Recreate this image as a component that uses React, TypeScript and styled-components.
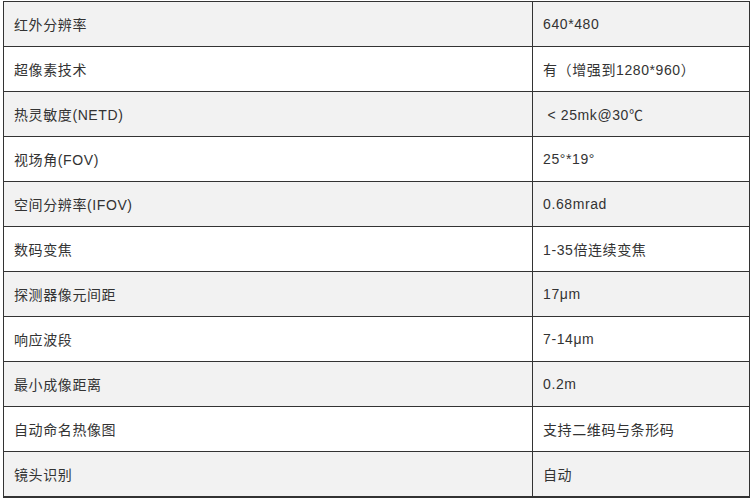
import React from "react";
import styled, { createGlobalStyle } from "styled-components";

const Global = createGlobalStyle`
  html, body { margin: 0; padding: 0; background: #ffffff; }
  body { font-family: "Liberation Sans", "Noto Sans CJK SC", Arial, sans-serif; overflow: hidden; }
`;

const Page = styled.div`
  padding: 1px 0 0 3px;
  width: 746px;
`;

const Table = styled.table`
  border-collapse: collapse;
  width: 746px;
  table-layout: fixed;
  border-bottom: 2px solid #333333;
`;

const Row = styled.tr<{ $shade: boolean }>`
  height: 45px;
  background: ${(p) => (p.$shade ? "#f2f2f2" : "#ffffff")};
`;

const Cell = styled.td<{ $w: number }>`
  width: ${(p) => p.$w}px;
  border: 1px solid #333333;
  padding: 0 0 0 10px;
  font-size: 14px;
  letter-spacing: 0.6px;
  color: #333333;
  vertical-align: middle;
  white-space: nowrap;
  box-sizing: border-box;
`;

const rows: [string, string][] = [
  ["红外分辨率", "640*480"],
  ["超像素技术", "有（增强到1280*960）"],
  ["热灵敏度(NETD)", "\u00a0< 25mk@30℃"],
  ["视场角(FOV)", "25°*19°"],
  ["空间分辨率(IFOV)", "0.68mrad"],
  ["数码变焦", "1-35倍连续变焦"],
  ["探测器像元间距", "17μm"],
  ["响应波段", "7-14μm"],
  ["最小成像距离", "0.2m"],
  ["自动命名热像图", "支持二维码与条形码"],
  ["镜头识别", "自动"],
];

export default function App() {
  return (
    <>
      <Global />
      <Page>
        <Table>
          <tbody>
            {rows.map(([k, v], i) => (
              <Row key={k} $shade={i % 2 === 0}>
                <Cell $w={529}>{k}</Cell>
                <Cell $w={217}>{v}</Cell>
              </Row>
            ))}
          </tbody>
        </Table>
      </Page>
    </>
  );
}
